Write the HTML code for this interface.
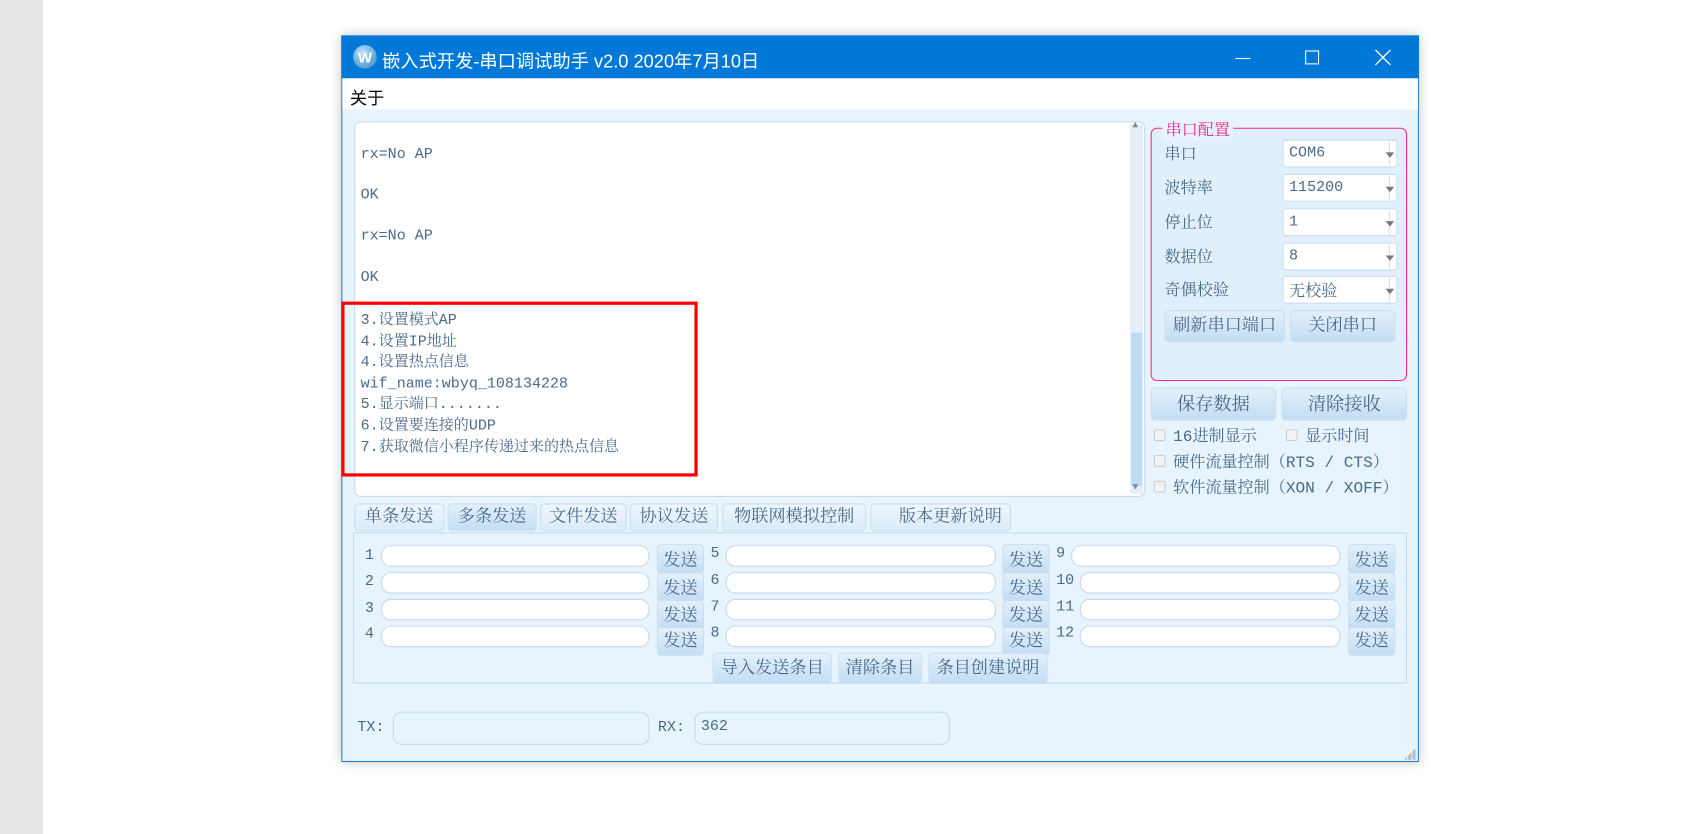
<!DOCTYPE html>
<html><head><meta charset="utf-8"><style>
*{margin:0;padding:0;box-sizing:border-box}
html,body{width:1683px;height:834px;overflow:hidden;background:#fff}
#s{position:absolute;left:0;top:0;width:1568px;height:777px;transform:scale(1.0733);transform-origin:0 0;font-family:"Liberation Mono","Noto Serif CJK SC",serif}
.a{position:absolute}
.t{font-size:14px;color:#4a6a8a;white-space:nowrap;font-family:"Liberation Mono","Noto Serif CJK SC",serif}
.btn{position:absolute;background:linear-gradient(#e3f0fb,#c3ddf3);border:1px solid #c8def0;border-radius:4px;color:#4a6a8a;font-size:16px;text-align:center;white-space:nowrap;font-family:"Liberation Serif","Noto Serif CJK SC",serif}
.inp{position:absolute;background:#fff;border:1px solid #c3d9ee;border-radius:9px;height:20px}
.cb{position:absolute;width:11px;height:11px;border:1px solid #ccc;border-radius:2px;background:#f2f2f2}
.cmb{position:absolute;background:#fff;border:1px solid #c8def0;border-radius:3px;width:107px;height:26px;font-size:14px;color:#4a6a8a;padding:4px 0 0 5px}
.cmb:after{content:"";position:absolute;right:2px;top:11px;border:4px solid transparent;border-top:5px solid #777}
.cmb:before{content:"";position:absolute;right:6px;top:1px;bottom:1px;border-left:1px solid #ddd}
</style></head><body><div id="s">
<div class="a" style="left:0;top:0;width:40px;height:777px;background:#e6e6e6"></div>
<div class="a" style="left:318px;top:33px;width:1004px;height:677px;background:#e8f4fd;border:1px solid #1a7fd6;box-shadow:0 0 10px rgba(0,0,0,.25)"></div>
<div class="a" style="left:318px;top:33px;width:1004px;height:40px;background:#0078d7"></div>
<div class="a" style="left:329px;top:42px;width:22px;height:22px;border-radius:50%;background:radial-gradient(circle at 40% 30%,#bdf,#38b);color:#fff;font:bold 14px 'Liberation Sans',sans-serif;text-align:center;line-height:22px">W</div>
<div class="a" style="left:356px;top:43px;color:#fff;font:17px 'Liberation Sans','Noto Sans CJK SC',sans-serif;white-space:nowrap">嵌入式开发-串口调试助手 v2.0 2020年7月10日</div>
<div class="a" style="left:1151px;top:54px;width:14px;height:1px;background:#fff"></div>
<div class="a" style="left:1216px;top:47px;width:13px;height:13px;border:1px solid #fff"></div>
<svg class="a" style="left:1281px;top:46px" width="15" height="15"><path d="M0.5 0.5L14.5 14.5M14.5 0.5L0.5 14.5" stroke="#fff" stroke-width="1.2"/></svg>
<div class="a" style="left:319px;top:73px;width:1002px;height:29px;background:#fff"></div>
<div class="a" style="left:326px;top:78px;font:16px 'Liberation Sans','Noto Sans CJK SC',sans-serif;color:#000">关于</div>
<div class="a" style="left:330px;top:113px;width:737px;height:350px;background:#fff;border:1px solid #c3dcf0;border-radius:6px"></div>
<div class="a" style="left:1053px;top:116px;width:12px;height:344px;background:#e3eef8"></div>
<div class="a" style="left:1054px;top:310px;width:10px;height:143px;background:#bddbf3"></div>
<div class="a t" style="left:1055px;top:112px;font-size:9px;color:#888">▲</div>
<div class="a t" style="left:1055px;top:449px;font-size:9px;color:#888">▼</div>
<div class="a t" style="left:336px;top:134px;line-height:20px">rx=No AP</div>
<div class="a t" style="left:336px;top:174px">OK</div>
<div class="a t" style="left:336px;top:212px">rx=No AP</div>
<div class="a t" style="left:336px;top:251px">OK</div>
<div class="a t" style="left:336px;top:290px;line-height:19.6px">3.设置模式AP<br>4.设置IP地址<br>4.设置热点信息<br>wif_name:wbyq_108134228<br>5.显示端口.......<br>6.设置要连接的UDP<br>7.获取微信小程序传递过来的热点信息</div>
<div class="a" style="left:318px;top:281px;width:332px;height:163px;border:3px solid #f00"></div>
<div class="a" style="left:1072px;top:119px;width:239px;height:236px;border:1px solid #f0288c;border-radius:6px;background:#e1effc"></div>
<div class="a" style="left:1083px;top:110px;background:#e8f4fd;padding:0 3px;color:#f0288c;font-size:15px;font-family:'Noto Serif CJK SC',serif">串口配置</div>
<div class="a t" style="left:1085px;top:132px;font-size:15px">串口</div>
<div class="a t" style="left:1085px;top:164px;font-size:15px">波特率</div>
<div class="a t" style="left:1085px;top:196px;font-size:15px">停止位</div>
<div class="a t" style="left:1085px;top:228px;font-size:15px">数据位</div>
<div class="a t" style="left:1085px;top:259px;font-size:15px">奇偶校验</div>
<div class="cmb" style="left:1195px;top:130px">COM6</div>
<div class="cmb" style="left:1195px;top:162px">115200</div>
<div class="cmb" style="left:1195px;top:194px">1</div>
<div class="cmb" style="left:1195px;top:226px">8</div>
<div class="cmb" style="left:1195px;top:257px;font-size:15px;padding-top:2px">无校验</div>
<div class="btn" style="left:1085px;top:289px;width:112px;height:30px;line-height:28px">刷新串口端口</div>
<div class="btn" style="left:1202px;top:289px;width:98px;height:30px;line-height:28px">关闭串口</div>
<div class="btn" style="left:1072px;top:361px;width:117px;height:31px;line-height:29px;font-size:17px">保存数据</div>
<div class="btn" style="left:1194px;top:361px;width:117px;height:31px;line-height:29px;font-size:17px">清除接收</div>
<div class="cb" style="left:1075px;top:400px"></div><div class="a t" style="left:1093px;top:395px;font-size:15px">16进制显示</div>
<div class="cb" style="left:1198px;top:400px"></div><div class="a t" style="left:1216px;top:395px;font-size:15px">显示时间</div>
<div class="cb" style="left:1075px;top:424px"></div><div class="a t" style="left:1093px;top:419px;font-size:15px">硬件流量控制（RTS / CTS）</div>
<div class="cb" style="left:1075px;top:448px"></div><div class="a t" style="left:1093px;top:443px;font-size:15px">软件流量控制（XON / XOFF）</div>
<div class="btn" style="left:330px;top:469px;width:84px;height:26px;line-height:24px;background:linear-gradient(#eef6fd,#dcebf8)">单条发送</div>
<div class="btn" style="left:417px;top:469px;width:83px;height:26px;line-height:24px">多条发送</div>
<div class="btn" style="left:503px;top:469px;width:81px;height:26px;line-height:24px;background:linear-gradient(#eef6fd,#dcebf8)">文件发送</div>
<div class="btn" style="left:587px;top:469px;width:82px;height:26px;line-height:24px;background:linear-gradient(#eef6fd,#dcebf8)">协议发送</div>
<div class="btn" style="left:673px;top:469px;width:134px;height:26px;line-height:24px;background:linear-gradient(#eef6fd,#dcebf8)">物联网模拟控制</div>
<div class="btn" style="left:811px;top:469px;width:131px;height:26px;line-height:24px;background:linear-gradient(#eef6fd,#dcebf8);padding-left:18px">版本更新说明</div>
<div class="a" style="left:329px;top:496px;width:982px;height:141px;border:1px solid #c3dcf0"></div>
<div class="a t" style="left:340px;top:510px">1</div><div class="a t" style="left:340px;top:534px">2</div><div class="a t" style="left:340px;top:559px">3</div><div class="a t" style="left:340px;top:583px">4</div>
<div class="inp" style="left:355px;top:508px;width:250px"></div><div class="inp" style="left:355px;top:533px;width:250px"></div><div class="inp" style="left:355px;top:558px;width:250px"></div><div class="inp" style="left:355px;top:583px;width:250px"></div>
<div class="a t" style="left:662px;top:508px">5</div><div class="a t" style="left:662px;top:533px">6</div><div class="a t" style="left:662px;top:558px">7</div><div class="a t" style="left:662px;top:582px">8</div>
<div class="inp" style="left:676px;top:508px;width:252px"></div><div class="inp" style="left:676px;top:533px;width:252px"></div><div class="inp" style="left:676px;top:558px;width:252px"></div><div class="inp" style="left:676px;top:583px;width:252px"></div>
<div class="a t" style="left:984px;top:508px">9</div><div class="a t" style="left:984px;top:533px">10</div><div class="a t" style="left:984px;top:558px">11</div><div class="a t" style="left:984px;top:582px">12</div>
<div class="inp" style="left:998px;top:508px;width:251px"></div><div class="inp" style="left:1006px;top:533px;width:243px"></div><div class="inp" style="left:1006px;top:558px;width:243px"></div><div class="inp" style="left:1006px;top:583px;width:243px"></div>
<div class="btn" style="left:612px;top:507px;width:44px;height:28px;line-height:30px">发送</div><div class="btn" style="left:612px;top:533px;width:44px;height:28px;line-height:30px">发送</div><div class="btn" style="left:612px;top:559px;width:44px;height:28px;line-height:28px">发送</div><div class="btn" style="left:612px;top:584px;width:44px;height:27px;line-height:26px">发送</div>
<div class="btn" style="left:934px;top:507px;width:44px;height:28px;line-height:30px">发送</div><div class="btn" style="left:934px;top:533px;width:44px;height:28px;line-height:30px">发送</div><div class="btn" style="left:934px;top:559px;width:44px;height:28px;line-height:28px">发送</div><div class="btn" style="left:934px;top:584px;width:44px;height:27px;line-height:26px">发送</div>
<div class="btn" style="left:1256px;top:507px;width:44px;height:28px;line-height:30px">发送</div><div class="btn" style="left:1256px;top:533px;width:44px;height:28px;line-height:30px">发送</div><div class="btn" style="left:1256px;top:559px;width:44px;height:28px;line-height:28px">发送</div><div class="btn" style="left:1256px;top:584px;width:44px;height:27px;line-height:26px">发送</div>
<div class="btn" style="left:664px;top:608px;width:111px;height:29px;line-height:27px">导入发送条目</div>
<div class="btn" style="left:781px;top:608px;width:78px;height:29px;line-height:27px">清除条目</div>
<div class="btn" style="left:865px;top:608px;width:111px;height:29px;line-height:27px">条目创建说明</div>
<div class="a t" style="left:333px;top:670px">TX:</div>
<div class="inp" style="left:366px;top:663px;width:239px;height:31px;border-radius:8px;background:#e8f4fd"></div>
<div class="a t" style="left:613px;top:670px">RX:</div>
<div class="inp" style="left:647px;top:663px;width:238px;height:31px;border-radius:8px;background:#e8f4fd"></div>
<div class="a t" style="left:653px;top:669px">362</div>
<div class="a" style="left:1308px;top:697px;width:11px;height:11px;background:repeating-linear-gradient(90deg,#bbb 0 3px,transparent 3px 4px);clip-path:polygon(100% 0,100% 100%,0 100%)"></div>
</div></body></html>
